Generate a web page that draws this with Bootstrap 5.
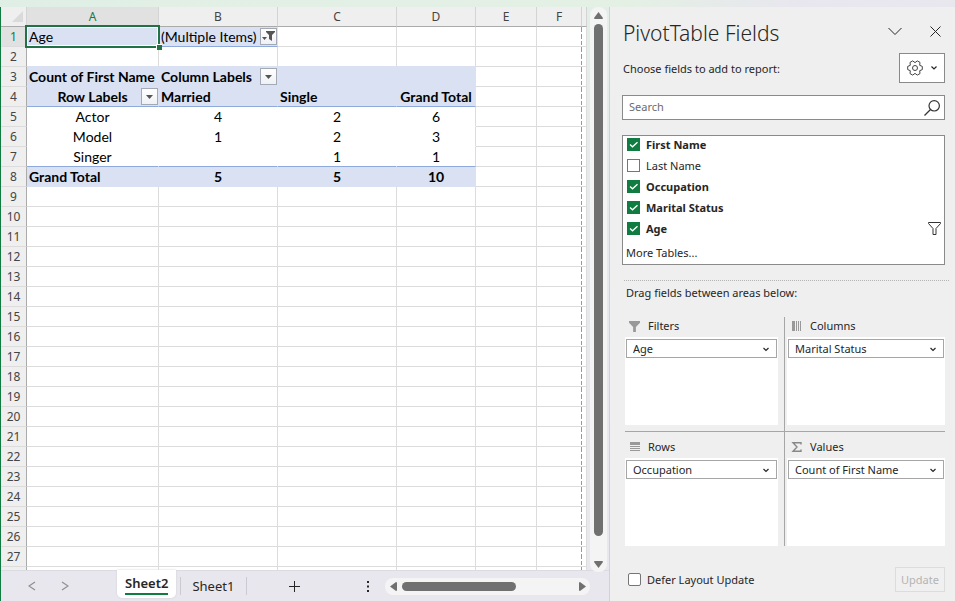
<!DOCTYPE html>
<html lang="en">
<head>
<meta charset="utf-8">
<meta name="viewport" content="width=device-width, initial-scale=1">
<title>PivotTable Fields</title>
<link href="https://cdn.jsdelivr.net/npm/bootstrap@5.3.0/dist/css/bootstrap.min.css" rel="stylesheet">
<style>
:root { --grid: #dcdcdc; --fill: #d9e1f2; --rule: #8ea9db; --xl: #107c41; --ink: #262626; }
body { font-family: "Noto Sans", sans-serif; font-size: 12px; line-height: 16px; color: var(--ink); background: #efefef; }
.ribbon-edge { height: 7px; background: linear-gradient(90deg, #e0efe6, #e4f0e4 65%, #e8e6ef 85%, #e9e7ee); }
.workbook { border-left: 1px solid var(--xl); border-right: 1px solid #d2d2d6; background: linear-gradient(180deg, #e2eee8, #e7e6ee 60%, #e9e7ee); }
.sheet-row { min-height: 0; }
.sheet { min-height: 0; overflow: hidden; }
.cells { table-layout: fixed; width: 100%; border-collapse: separate; border-spacing: 0; background: #fff; font-family: Lato, sans-serif; font-size: 14px; line-height: 19px; color: #000; }
.cells th, .cells td { height: 20px; padding: 0 2px; border: 0 solid var(--grid); border-width: 0 1px 1px 0; white-space: nowrap; position: relative; }
.cells thead th, .cells tbody th { background: #efefef; color: #444; font-family: "Noto Sans", sans-serif; font-size: 12px; font-weight: 400; text-align: center; padding: 0; }
.cells thead th { border-bottom-color: #ababab; border-right-color: #d4d4d4; }
.cells tbody th { border-right-color: #ababab; }
.cells .picked { background: #e1e1e1; color: var(--xl); }
.cells td:nth-child(7) { border-right: 0; background: repeating-linear-gradient(180deg, #999 0 5px, #fff 5px 7px, #999 7px 12px, #fff 12px 14px, #999 14px 18px, #fff 18px 20px) right top / 1px 20px no-repeat; }
.corner { display: block; margin: 0 3px 0 auto; }
.cells td.fill { background: var(--fill); border-color: var(--fill); }
.cells td.plain { border-color: #fff; }
.cells td.plain:nth-child(5) { border-right-color: var(--grid); }
.cells td.above { border-bottom-color: var(--fill); }
.cells td.ruled { border-bottom-color: var(--rule); }
.selection { position: absolute; inset: -2px; border: 2px solid #217346; pointer-events: none; box-shadow: inset 0 0 0 1px #fff; z-index: 1; }
.selection::after { content: ""; position: absolute; right: -4px; bottom: -4px; width: 6px; height: 6px; background: #217346; border: solid #fff; border-width: 1px 0 0 1px; }
.drop { position: absolute; right: 0; top: 1px; width: 17px; height: 17px; padding: 0; border: 1px solid #a3a9b5; background: linear-gradient(#fff, #eef1f5); display: flex; align-items: center; justify-content: center; }
.vbar { width: 17px; margin: 0 2px -2px 3px; border-radius: 8px; background: #f4f4f4; padding: 5px 0 4px; position: relative; z-index: 1; }
.vthumb { width: 9px; border-radius: 5px; background: #707070; margin: 5px 0 25px; }
.tabs { height: 31px; font-size: 13px; border-top: 1px solid #dcdbe2; padding: 0 19px 0 14px; }
.tabs button { border: 0; background: none; padding: 0; color: var(--ink); line-height: 18px; }
.tabs .step { width: 33px; color: #8f8f8f; }
.tabs .on { height: 28px; padding: 0 8px; margin: -1px 4px 0 36px; background: #fff; border-radius: 0 0 5px 5px; font-weight: 600; box-shadow: 0 0 2px #c9c8d0; }
.on span { display: block; border-bottom: 2px solid var(--xl); line-height: 20px; }
.tabs .off { padding: 0 12px 0 11px; border: solid #cbcad2; border-width: 0 1px; }
.tabs .add { margin-left: 42px; }
.hbar { width: 205px; height: 17px; border-radius: 8px; background: #f4f4f4; padding: 0 4px 0 5px; }
.hthumb { width: 114px; height: 9px; border-radius: 5px; background: #707070; margin: 0 auto 0 5px; }
.pane { width: 345px; padding: 10px 10px 9px 12px; font-size: 11px; }
.pane h1 { font-size: 21px; line-height: 32px; font-weight: 300; margin: 0 0 0 1px; }
.bare { border: 0; background: none; padding: 0; color: var(--ink); line-height: 0; }
.intro { padding: 2px 0 0 1px; }
.gear { width: 46px; height: 30px; border: 1px solid #8a8a8a; background: #fff; padding: 0; }
.search { height: 25px; border: 1px solid #8a8a8a; background: #fff; margin: 12px 0 15px; }
.search input { border: 0; outline: 0; background: none; font-size: 11px; line-height: 16px; padding: 0 0 1px 6px; min-width: 0; }
.search input::placeholder { color: #6b6b6b; }
.fields { border: 1px solid #8a8a8a; background: #fff; height: 130px; padding: 0 3px; }
.fields .form-check, .defer { min-height: 0; height: 21px; padding: 0; margin: 0; gap: 6px; }
.fields .form-check { padding-left: 1px; }
.fields .form-check:first-child { margin-top: -2px; }
.pane .form-check-input { width: 13px; height: 13px; margin: 0; float: none; border-radius: 0; border: 1px solid #767676; flex: none; }
.pane .form-check-input:checked { background-color: var(--xl); border-color: var(--xl); background-size: 11px 11px;
  background-image: url("data:image/svg+xml,%3Csvg xmlns='http://www.w3.org/2000/svg' viewBox='0 0 11 11'%3E%3Cpath d='M2 5.500l2.500 2.300 5-4.600' fill='none' stroke='%23fff' stroke-width='1.300'/%3E%3C/svg%3E"); }
.pane .defer .form-check-input { border-radius: 2px; }
.form-check-input:checked + label { font-weight: 700; }
.more { margin-top: 6px; }
.dots { border-top: 1px dotted #b4b4b4; margin: 15px -4px 4px 2px; }
.areas { margin: 16px 0 0 3px; }
.zone-l { border-right: 1px solid #a6a6a6; padding-right: 6px; }
.zone-r { padding-left: 2px; }
.zone-t { border-bottom: 1px solid #a6a6a6; padding-bottom: 6px; }
.zone label { height: 20px; padding: 0 0 2px 4px; gap: 8px; }
.zone-b label { height: 26px; padding-top: 6px; }
.well { height: 88px; background: #fff; padding: 2px 1px; }
.well .form-select { height: 19px; border: 1px solid #a6a6a6; border-radius: 0; font-size: 11px; line-height: 16px; padding: 0 20px 0 6px; color: var(--ink); background-color: #fff; background-position: right 6px center; background-size: 8px 8px;
  background-image: url("data:image/svg+xml,%3Csvg xmlns='http://www.w3.org/2000/svg' viewBox='0 0 8 8'%3E%3Cpath d='M1.500 3L4 5.500 6.500 3' fill='none' stroke='%23262626' stroke-width='1.200'/%3E%3C/svg%3E"); }
.defer { margin-left: 2px; }
.update { width: 50px; height: 25px; border: 1px solid #dcdcdc; background: #f0f0f0; color: #b4b4b4; padding: 0; }
</style>
</head>
<body>
<div class="d-flex flex-column vh-100">
  <div class="ribbon-edge flex-shrink-0"></div>
  <div class="d-flex flex-grow-1 overflow-hidden">
    <main class="workbook d-flex flex-column flex-grow-1">
      <div class="sheet-row d-flex flex-grow-1">
        <div class="sheet flex-grow-1">
          <table class="cells">
            <colgroup><col style="width:26px"><col style="width:132px"><col style="width:119px"><col style="width:119px"><col style="width:79px"><col style="width:61px"><col style="width:45px"><col></colgroup>
            <thead>
              <tr><th><svg class="corner" width="11" height="11" viewBox="0 0 11 11"><path d="M11 0v11H0z" fill="#dadada"/></svg></th><th class="picked">A</th><th>B</th><th>C</th><th>D</th><th>E</th><th>F</th><th></th></tr>
            </thead>
            <tbody id="rows">
              <tr><th class="picked">1</th><td class="fill ruled">Age<div class="selection"></div></td><td class="fill ruled">(Multiple Items)<button class="drop" aria-label="Filter Age"><svg width="13" height="11" viewBox="0 0 13 11"><path d="M4 0h9v1L10 4v6L7 8V4L4 1zM0 6h5L2.500 9z" fill="#555"/></svg></button></td><td></td><td></td><td></td><td></td><td></td></tr>
              <tr><th>2</th><td class="above"></td><td class="above"></td><td class="above"></td><td class="above"></td><td></td><td></td><td></td></tr>
              <tr class="fw-bold"><th>3</th><td class="fill">Count of First Name</td><td class="fill">Column Labels<button class="drop" aria-label="Column Labels"><svg width="7" height="4" viewBox="0 0 7 4"><path d="M0 0h7L3.500 4z" fill="#555"/></svg></button></td><td class="fill"></td><td class="fill"></td><td></td><td></td><td></td></tr>
              <tr class="fw-bold"><th>4</th><td class="fill ruled text-center">Row Labels<button class="drop" aria-label="Row Labels"><svg width="7" height="4" viewBox="0 0 7 4"><path d="M0 0h7L3.500 4z" fill="#555"/></svg></button></td><td class="fill ruled">Married</td><td class="fill ruled">Single</td><td class="fill ruled text-center">Grand Total</td><td></td><td></td><td></td></tr>
              <tr class="text-center"><th>5</th><td class="plain">Actor</td><td class="plain">4</td><td class="plain">2</td><td class="plain">6</td><td></td><td></td><td></td></tr>
              <tr class="text-center"><th>6</th><td class="plain">Model</td><td class="plain">1</td><td class="plain">2</td><td class="plain">3</td><td></td><td></td><td></td></tr>
              <tr class="text-center"><th>7</th><td class="plain ruled">Singer</td><td class="plain ruled"></td><td class="plain ruled">1</td><td class="plain ruled">1</td><td></td><td></td><td></td></tr>
              <tr class="fw-bold text-center"><th>8</th><td class="fill text-start">Grand Total</td><td class="fill">5</td><td class="fill">5</td><td class="fill">10</td><td></td><td></td><td></td></tr>
            </tbody>
          </table>
        </div>
        <div class="vbar d-flex flex-column align-items-center flex-shrink-0">
          <svg width="9" height="7" viewBox="0 0 9 7"><path d="M4.500 0L9 6q0 1-1 1H1q-1 0-1-1z" fill="#707070"/></svg>
          <div class="vthumb flex-grow-1"></div>
          <svg width="9" height="7" viewBox="0 0 9 7"><path d="M4.500 7L9 1q0-1-1-1H1Q0 0 0 1z" fill="#707070"/></svg>
        </div>
      </div>
      <div class="tabs d-flex align-items-center flex-shrink-0">
        <button class="step" aria-label="Previous sheet"><svg class="d-block mx-auto" width="8" height="10" viewBox="0 0 8 10"><path d="M7 1L1 5l6 4" fill="none" stroke="currentColor" stroke-width="1.200"/></svg></button>
        <button class="step" aria-label="Next sheet"><svg class="d-block mx-auto" width="8" height="10" viewBox="0 0 8 10"><path d="M1 1l6 4-6 4" fill="none" stroke="currentColor" stroke-width="1.200"/></svg></button>
        <button class="on align-self-start"><span>Sheet2</span></button>
        <button class="off">Sheet1</button>
        <button class="add" aria-label="New sheet"><svg class="d-block" width="11" height="11" viewBox="0 0 11 11"><path d="M5.500 0v11M0 5.500h11" stroke="#262626"/></svg></button>
        <svg class="ms-auto me-3" width="3" height="11" viewBox="0 0 3 11"><path d="M1 0h2v2H1zM1 4.500h2v2H1zM1 9h2v2H1z" fill="#262626"/></svg>
        <div class="hbar d-flex align-items-center flex-shrink-0">
          <svg width="7" height="9" viewBox="0 0 7 9"><path d="M0 4.500L6 0q1 0 1 1v7q0 1-1 1z" fill="#707070"/></svg>
          <div class="hthumb"></div>
          <svg width="7" height="9" viewBox="0 0 7 9"><path d="M7 4.500L1 0Q0 0 0 1v7q0 1 1 1z" fill="#707070"/></svg>
        </div>
      </div>
    </main>
    <aside class="pane flex-shrink-0 d-flex flex-column">
      <div class="d-flex align-items-center">
        <h1 class="me-auto">PivotTable Fields</h1>
        <button class="bare me-4 pb-1" aria-label="Pane options"><svg width="14" height="9" viewBox="0 0 14 9"><path d="M.5 1L7 7.500 13.500 1" fill="none" stroke="currentColor"/></svg></button>
        <button class="bare ms-1 me-1 pb-1" aria-label="Close"><svg width="11" height="11" viewBox="0 0 11 11"><path d="M.5.500l10 10M10.500.500l-10 10" stroke="currentColor"/></svg></button>
      </div>
      <div class="d-flex align-items-center mt-1">
        <span class="intro me-auto">Choose fields to add to report:</span>
        <button class="gear d-flex align-items-center justify-content-center gap-2" aria-label="Tools">
          <svg width="16" height="16" viewBox="0 0 16 16" fill="none" stroke="#444" stroke-linejoin="round"><path d="M15.300 6.400v3.200l-2.600 1.100.3 2.900-2.700 1.500L8 13.400l-2.300 1.700L3 13.600l.3-2.900L.7 9.600V6.400l2.600-1.100L3 2.400 5.700.900 8 2.600 10.300.900 13 2.400l-.3 2.900z"/><circle cx="8" cy="8" r="2.500"/></svg>
          <svg width="6" height="4" viewBox="0 0 6 4"><path d="M.5.500L3 3 5.500.500" fill="none" stroke="#262626" stroke-width="1.200"/></svg>
        </button>
      </div>
      <div class="search d-flex align-items-center">
        <input class="flex-grow-1" type="search" placeholder="Search" aria-label="Search fields">
        <button class="bare me-1" aria-label="Search"><svg width="16" height="16" viewBox="0 0 16 16" fill="none" stroke="#333" stroke-width="1.200"><circle cx="10.200" cy="5.800" r="5.200"/><path d="M6.500 9.500L.5 15.500"/></svg></button>
      </div>
      <div class="fields">
        <div class="form-check d-flex align-items-center"><input class="form-check-input" type="checkbox" id="f1" checked><label for="f1">First Name</label></div>
        <div class="form-check d-flex align-items-center"><input class="form-check-input" type="checkbox" id="f2"><label for="f2">Last Name</label></div>
        <div class="form-check d-flex align-items-center"><input class="form-check-input" type="checkbox" id="f3" checked><label for="f3">Occupation</label></div>
        <div class="form-check d-flex align-items-center"><input class="form-check-input" type="checkbox" id="f4" checked><label for="f4">Marital Status</label></div>
        <div class="form-check d-flex align-items-center"><input class="form-check-input" type="checkbox" id="f5" checked><label class="me-auto" for="f5">Age</label><svg width="13" height="13" viewBox="0 0 13 13"><path d="M.5.500h12v1L8 6.500v6H5v-6L.5 1.500z" fill="none" stroke="#333"/></svg></div>
        <a class="more d-block text-reset text-decoration-none" href="#">More Tables...</a>
      </div>
      <div class="dots"></div>
      <div class="ps-1">Drag fields between areas below:</div>
      <div class="areas row g-0">
        <div class="zone zone-l zone-t col-6"><label class="d-flex align-items-center" for="z1"><svg width="11" height="11" viewBox="0 0 12 12"><path d="M0 0h12v2L7.500 6.500V12h-3V6.500L0 2z" fill="#999"/></svg>Filters</label>
          <div class="well"><select class="form-select" id="z1"><option>Age</option></select></div></div>
        <div class="zone zone-r zone-t col-6"><label class="d-flex align-items-center" for="z2"><svg width="11" height="10" viewBox="0 0 11 10"><path d="M1 0h3v10H1zM5 0h1v10H5zM7 0h1v10H7zM9 0h1v10H9z" fill="#999"/></svg>Columns</label>
          <div class="well"><select class="form-select" id="z2"><option>Marital Status</option></select></div></div>
        <div class="zone zone-l zone-b col-6"><label class="d-flex align-items-center" for="z3"><svg width="11" height="10" viewBox="0 0 11 10"><path d="M1 0h10v3H1zM1 4h10v1H1zM1 6h10v1H1zM1 8h10v1H1z" fill="#999"/></svg>Rows</label>
          <div class="well"><select class="form-select" id="z3"><option>Occupation</option></select></div></div>
        <div class="zone zone-r zone-b col-6"><label class="d-flex align-items-center" for="z4"><svg width="11" height="10" viewBox="0 0 11 10"><path d="M10 2.500V.700H2L6 5 2 9.300h8V7.500" fill="none" stroke="#888" stroke-width="1.400"/></svg>Values</label>
          <div class="well"><select class="form-select" id="z4"><option>Count of First Name</option></select></div></div>
      </div>
      <div class="d-flex align-items-center mt-auto">
        <div class="form-check defer d-flex align-items-center me-auto ps-1"><input class="form-check-input" type="checkbox" id="defer"><label for="defer">Defer Layout Update</label></div>
        <button class="update" disabled>Update</button>
      </div>
    </aside>
  </div>
</div>
<script>
// Empty rows below the pivot table; the last one is only partly in view.
var rows = document.getElementById('rows');
for (var n = 9; n <= 28; n++) {
  var label = n < 28 ? n : '';
  rows.insertAdjacentHTML('beforeend', '<tr><th>' + label + '</th>' + '<td></td>'.repeat(7) + '</tr>');
}
</script>
<script src="https://cdn.jsdelivr.net/npm/bootstrap@5.3.0/dist/js/bootstrap.bundle.min.js"></script>
</body>
</html>
